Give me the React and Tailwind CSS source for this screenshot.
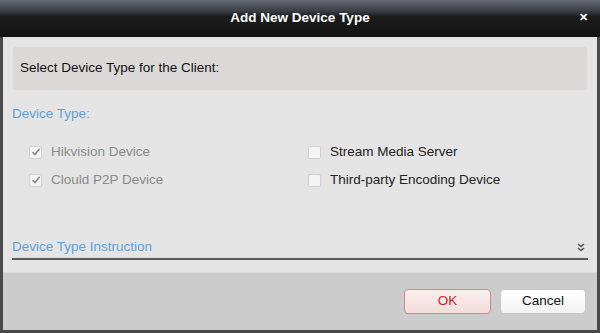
import React from 'react';

const options = [
    [
        { label: 'Hikvision Device', checked: true, disabled: true },
        { label: 'Clould P2P Device', checked: true, disabled: true },
    ],
    [
        { label: 'Stream Media Server', checked: false },
        { label: 'Third-party Encoding Device', checked: false },
    ],
];

function Check({ label, checked, disabled }) {
    return (
        <div className="flex items-center h-[28px]">
            <span className="w-[13px] h-[13px] mr-[9px] rounded-[2px] border border-[#d0d0d0] bg-[#f4f4f4] flex items-center justify-center">
                {checked && (
                    <svg width="10" height="10" viewBox="0 0 10 10">
                        <path d="M1.5 5.2 L4 7.6 L8.6 1.8" fill="none" stroke="#8a8a8a" strokeWidth="1.6" />
                    </svg>
                )}
            </span>
            <span className={disabled ? 'text-[#8a8a8a]' : 'text-[#222]'}>{label}</span>
        </div>
    );
}

export default function App() {
    return (
        <div className="w-[600px] h-[333px] flex flex-col bg-[#4a4a4a] p-[0_3px_3px_3px] text-[13.5px] font-['Liberation_Sans',Arial,sans-serif]">
            {/* title bar */}
            <div className="h-[37px] -mx-[3px] flex items-center justify-center relative bg-[linear-gradient(#666c75_0%,#3a3d42_30%,#1c1c1c_45%,#141414_100%)] text-white font-bold">
                Add New Device Type
                <span className="absolute right-[12px] top-[12px] text-[11px] leading-none">✕</span>
            </div>

            <div className="flex-1 flex flex-col bg-[#e4e4e4]">
                <div className="px-[10px] pt-[10px]">
                    <div className="h-[43px] bg-[#dbd9d7] rounded-[3px] flex items-center px-[7px] text-[#111]">
                        Select Device Type for the Client:
                    </div>
                </div>

                <div className="px-[9px] mt-[14px] text-[#5ea1d8]">Device Type:</div>

                <div className="flex mt-[14px] pl-[26px]">
                    {options.map((col, i) => (
                        <div key={i} className={i === 0 ? 'w-[279px]' : ''}>
                            {col.map(o => <Check key={o.label} {...o} />)}
                        </div>
                    ))}
                </div>

                <div className="mx-[9px] mt-[44px] leading-[18px] border-b-2 border-[#5a5a5a] flex items-center justify-between pb-[2px]">
                    <span className="text-[#5ea1d8]">Device Type Instruction</span>
                    <svg width="8" height="9" viewBox="0 0 8 9" className="mr-[3px]">
                        <path d="M1 1 L4 3.5 L7 1 M1 5 L4 7.5 L7 5" fill="none" stroke="#555" strokeWidth="1.6" />
                    </svg>
                </div>

                <div className="flex-1" />

                <div className="h-[58px] bg-[#cccccc] border-t border-[#dadada] flex items-center justify-end gap-[9px] pr-[11px]">
                    <button className="w-[87px] h-[25px] rounded-[4px] border border-[#c98a8a] bg-[linear-gradient(#fdeeee,#f2dcdc)] text-[#c0262a]">OK</button>
                    <button className="w-[86px] h-[25px] rounded-[4px] border border-[#c8c8c8] bg-[linear-gradient(#ffffff,#f2f2f2)] text-[#111]">Cancel</button>
                </div>
            </div>
        </div>
    );
}
